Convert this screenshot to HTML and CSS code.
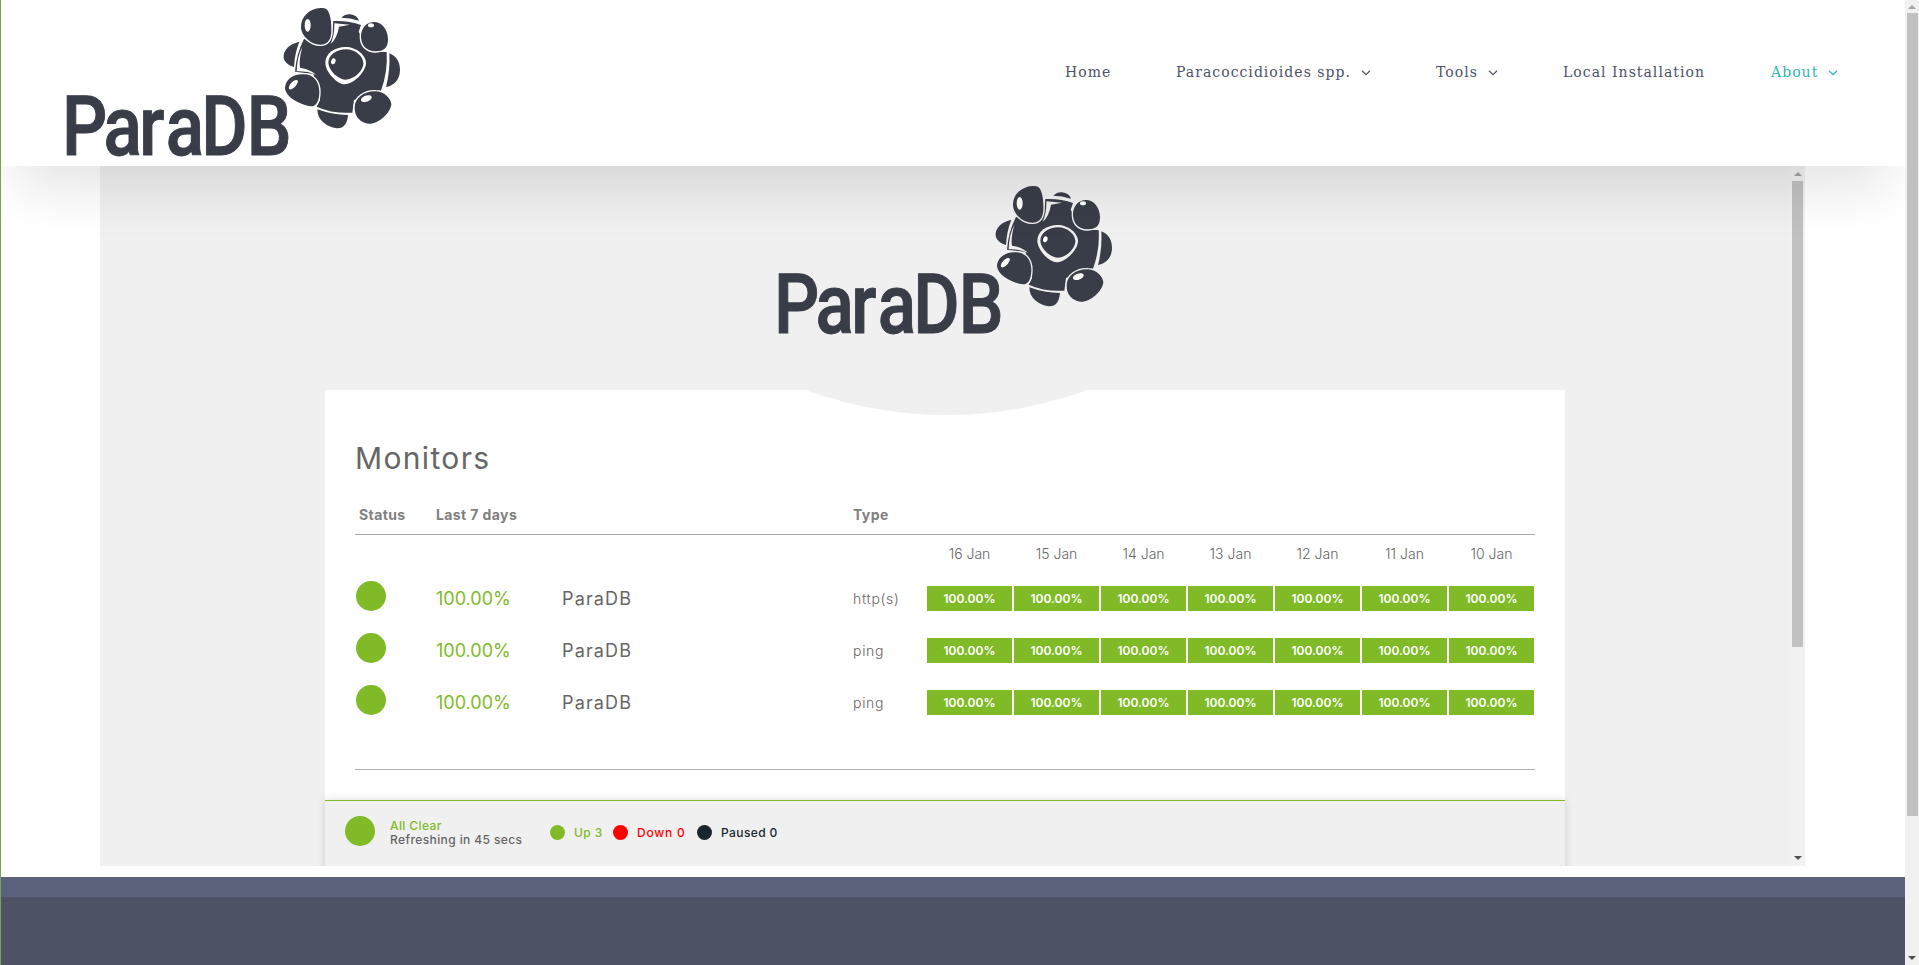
FILE: index.html
```
<!DOCTYPE html>
<html lang="en">
<head>
<meta charset="utf-8">
<title>ParaDB</title>
<link rel="stylesheet" href="styles.css">
</head>
<body>
<svg class="defs" aria-hidden="true">
  <symbol id="logo" viewBox="0 0 1110 498">
    <g class="logo-word" transform="translate(0 464) scale(.86 1)">
      <text x="42 187 311 404 528 686" y="0">ParaDB</text>
    </g>
    <g transform="translate(660 0)">
      <path d="M88 125C48 134 34 162 44 182Q54 196 72 201Q74 160 88 125Z"/>
      <path d="M214 53Q225 42 240 43Q262 46 267 62Q240 53 214 53Z"/>
      <path d="M358 160C380 168 390 188 390 210C390 240 370 258 348 261Q361 212 358 160Z"/>
      <path d="M142 328Q188 345 234 345C232 370 222 386 200 385C170 380 142 362 142 328Z"/>
      <path d="M102 116Q78 165 75 215L130 222L150 300L140 320Q190 342 247 338L252 300L333 272Q354 215 350 156L300 155L266 95L273 75Q235 61 190 63L186 110L150 138Z"/>
      <path class="gap" d="M193 70L240 74L207 80Q202 113 182 132Q194 105 193 70ZM97 141Q86 180 90 203Q120 207 138 224Q110 212 80 214Q81 170 97 141Z"/>
      <path class="bump" d="M152 24C118 26 92 50 93 82C94 110 125 135 152 134C172 133 183 120 184 95C185 70 182 40 170 28Q163 23 152 24Z"/>
      <path class="bump" d="M312 66C335 66 354 88 354 118C354 145 340 154 318 154C292 155 274 138 273 112C272 86 288 66 312 66Z"/>
      <path class="bump" d="M45 265C45 240 70 221 100 223C130 222 148 245 148 275C148 300 140 320 122 319C95 315 48 295 45 265Z"/>
      <path class="bump" d="M318 274C345 274 365 300 364 314C360 340 325 372 297 371C270 370 253 348 254 322C255 292 285 272 318 274Z"/>
      <path class="gap" d="M226 141C260 141 288 166 288 190C287 217 250 253 223 253C200 252 166 215 166 188C166 160 195 141 226 141Z"/>
      <path d="M228 148C256 148 280 169 280 190C280 213 252 239 226 239C205 238 176 212 175 188C175 165 200 148 228 148Z"/>
      <g class="shine">
        <ellipse cx="113" cy="76" rx="9" ry="19"/>
        <ellipse cx="303" cy="76" rx="9" ry="6"/>
        <ellipse cx="70" cy="254" rx="18" ry="8" transform="rotate(-47 70 254)"/>
        <ellipse cx="289" cy="296" rx="17" ry="9" transform="rotate(-20 289 296)"/>
        <ellipse cx="190" cy="184" rx="6.500" ry="9" transform="rotate(20 190 184)"/>
      </g>
    </g>
  </symbol>
  <symbol id="chevron" viewBox="0 0 10 6"><path d="M1 .8L5 4.600L9 .8" fill="none" stroke="currentColor" stroke-width="1.200"/></symbol>
  <symbol id="up" viewBox="0 0 8 4"><path d="M0 4L4 0L8 4Z"/></symbol>
  <symbol id="down" viewBox="0 0 8 4"><path d="M0 0L4 4L8 0Z"/></symbol>
</svg>

<div class="window">
  <div class="page">
    <header class="header">
      <svg class="logo"><use href="#logo"/></svg>
      <nav class="nav">
        <a class="n-home">Home</a>
        <a class="n-para">Paracoccidioides spp.<svg><use href="#chevron"/></svg></a>
        <a class="n-tools">Tools<svg><use href="#chevron"/></svg></a>
        <a class="n-local">Local Installation</a>
        <a class="n-about">About<svg><use href="#chevron"/></svg></a>
      </nav>
    </header>

    <main class="frame">
      <div class="status">
        <svg class="logo logo-center"><use href="#logo"/></svg>
        <section class="card">
          <svg class="notch" viewBox="0 0 277 25"><path d="M0 0H277V1Q208 25 138.500 25Q69 25 0 1Z"/></svg>
          <h1>Monitors</h1>
          <div class="row head"><b>Status</b><b>Last 7 days</b><b></b><b>Type</b></div>
          <div class="row dates"><span>16 Jan</span><span>15 Jan</span><span>14 Jan</span><span>13 Jan</span><span>12 Jan</span><span>11 Jan</span><span>10 Jan</span></div>
          <div class="row monitor"><i class="dot"></i><span class="pct">100.00%</span><span class="name">ParaDB</span><span class="type">http(s)</span>
            <div class="days"><span>100.00%</span><span>100.00%</span><span>100.00%</span><span>100.00%</span><span>100.00%</span><span>100.00%</span><span>100.00%</span></div></div>
          <div class="row monitor"><i class="dot"></i><span class="pct">100.00%</span><span class="name">ParaDB</span><span class="type">ping</span>
            <div class="days"><span>100.00%</span><span>100.00%</span><span>100.00%</span><span>100.00%</span><span>100.00%</span><span>100.00%</span><span>100.00%</span></div></div>
          <div class="row monitor"><i class="dot"></i><span class="pct">100.00%</span><span class="name">ParaDB</span><span class="type">ping</span>
            <div class="days"><span>100.00%</span><span>100.00%</span><span>100.00%</span><span>100.00%</span><span>100.00%</span><span>100.00%</span><span>100.00%</span></div></div>
          <hr>
        </section>
        <footer class="summary">
          <i class="dot"></i>
          <div class="state"><span class="ok">All Clear</span><span>Refreshing in 45 secs</span></div>
          <div class="count up"><i></i>Up 3</div>
          <div class="count dn"><i></i>Down 0</div>
          <div class="count paused"><i></i>Paused 0</div>
        </footer>
      </div>
      <div class="scroll inner"><svg class="a-up"><use href="#up"/></svg><div class="thumb"></div><svg class="a-down"><use href="#down"/></svg></div>
    </main>
    <div class="band"></div>
    <div class="foot"></div>
  </div>
  <div class="scroll outer"><svg class="a-up"><use href="#up"/></svg><div class="thumb"></div><svg class="a-down"><use href="#down"/></svg></div>
</div>
</body>
</html>
```
FILE: styles.css
```
* { box-sizing: border-box; }
body { margin: 0; overflow: hidden; background: #fff; }
.defs { display: none; }
svg { display: block; }

.window { display: flex; width: 1919px; height: 965px; border-left: 1px solid #7aa354; }
.page { width: 1904px; height: 965px; overflow: hidden; display: flex; flex-direction: column; }

/* header */
.header { position: relative; z-index: 2; flex: none; height: 166px; background: #fff; display: flex; justify-content: space-between; padding-left: 49px; --bg: #fff; box-shadow: 0 38px 56px -16px rgba(0, 0, 0, .11); }
.logo { width: 370px; height: 166px; fill: #383d48; flex: none; }
.logo-word { font: 500 248px Roboto, "Liberation Sans", sans-serif; stroke: #383d48; stroke-width: 3px; }
.gap { fill: var(--bg); }
.bump { stroke: var(--bg); stroke-width: 8px; paint-order: stroke; }
.shine { fill: #fff; }
.nav { display: grid; grid-template-columns: 111px 260px 127px 208px 134px; padding-top: 60px; font: 14px/24px "DejaVu Serif", "Liberation Serif", serif; letter-spacing: 1.030px; color: #4d5268; }
.nav a { display: flex; align-items: flex-start; white-space: nowrap; }
.nav svg { width: 10px; height: 6px; margin: 10px 0 0 10px; }
.nav .n-about { color: #2fb3b8; }

/* embedded status page */
.frame { flex: none; display: flex; width: 1705px; height: 700px; margin: 0 0 11px 99px; background: #f0f0f0; overflow: hidden; font-family: Inter, "Open Sans", sans-serif; color: #666; }
.status { width: 1690px; padding: 12px 0 0 225px; --bg: #f0f0f0; }
.logo-center { margin-left: 437px; }
.card { width: 1240px; height: 410px; margin-top: 46px; padding: 0 30px 0 31px; background: #fff; position: relative; }
.notch { width: 277px; height: 25px; margin: 0 0 0 452px; fill: #f0f0f0; }
h1 { margin: 23px 0 0 -1px; font-size: 30px; line-height: 40px; font-weight: 400; letter-spacing: 1.350px; }
.row { display: grid; grid-template-columns: 80px 126px 291px 74px 607px; }
.head { margin: 22px 0 0 -1px; height: 35px; width: 1180px; padding-left: 1px; border-bottom: 1px solid #aaa; font-size: 14px; line-height: 30px; color: #808080; letter-spacing: .4px; }
.head b:first-child { padding-left: 3px; }
.dates { grid-template-columns: repeat(7, 85px); column-gap: 2px; padding-left: 571px; height: 46px; font-size: 14px; font-weight: 300; line-height: 38px; text-align: center; }
.monitor { height: 52px; align-items: start; line-height: 30px; }
.dot { display: block; width: 30px; height: 30px; border-radius: 50%; background: #80ba27; }
.pct, .name { font-size: 18px; padding-top: 3px; }
.pct { color: #80ba27; }
.name { letter-spacing: 1.150px; }
.type { font-size: 14px; font-weight: 300; padding-top: 3px; letter-spacing: .7px; }
.days { display: grid; grid-template-columns: repeat(7, 85px); column-gap: 2px; padding-top: 5px; }
.days span { height: 25px; background: #80ba27; color: #fff; font-size: 12px; line-height: 25px; font-weight: 600; text-align: center; }
hr { margin: 32px 0 0 -1px; width: 1180px; height: 1px; border: 0; background: #b0b0b0; }
.summary { position: relative; display: flex; width: 1240px; height: 80px; border-top: 1px solid #80ba27; background: #f0f0f0; padding: 15px 20px; font-size: 12px; line-height: 14px; font-weight: 500; box-shadow: 0 0 8px rgba(0, 0, 0, .15); letter-spacing: .4px; }
.state { display: flex; flex-direction: column; width: 160px; margin-left: 15px; padding-top: 3px; }
.ok, .up { color: #80ba27; }
.count { display: flex; height: 15px; margin-top: 9px; gap: 9px; line-height: 15px; white-space: nowrap; }
.count i { width: 15px; height: 15px; border-radius: 50%; background: currentColor; }
.up { width: 63px; }
.dn { width: 84px; color: #f00; letter-spacing: .8px; }
.paused { color: #17262f; }

/* scrollbars */
.scroll { flex: none; display: flex; flex-direction: column; align-items: center; background: #f1f1f1; }
.scroll svg { width: 8px; height: 4px; fill: #505050; }
.scroll .thumb { width: 11px; background: #c1c1c1; }
.inner { width: 15px; height: 700px; padding: 6px 0 6px; }
.inner .thumb { height: 466px; margin-top: 5px; }
.outer { width: 14px; height: 965px; padding: 5px 0; }
.outer .thumb { height: 803px; margin-top: 4px; }
.scroll .a-up { fill: #a3a3a3; }
.scroll .a-down { margin-top: auto; }

/* page footer */
.band { flex: none; height: 20px; background: #5b627b; }
.foot { flex: none; height: 68px; background: #4d5265; }
```
